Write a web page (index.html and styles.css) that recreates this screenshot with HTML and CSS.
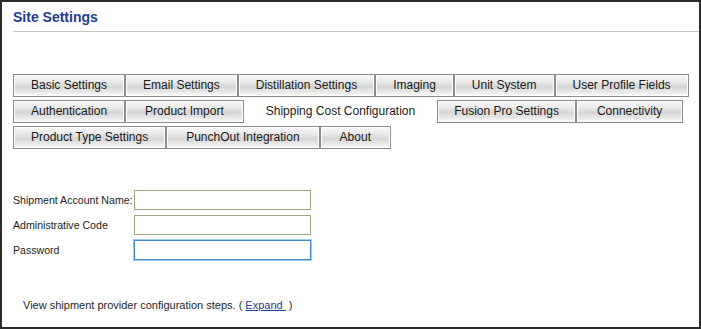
FILE: index.html
```html
<!DOCTYPE html>
<html lang="en">
<head>
    <meta charset="UTF-8">
    <meta name="viewport" content="width=device-width, initial-scale=1.0">
    <title>Site Settings</title>
    <link rel="stylesheet" href="styles.css">
</head>
<body>
    <div class="page">
        <h1 class="page-title">Site Settings</h1>

        <div class="tabs">
            <div class="tab-row">
                <a class="tab">Basic Settings</a>
                <a class="tab">Email Settings</a>
                <a class="tab">Distillation Settings</a>
                <a class="tab">Imaging</a>
                <a class="tab">Unit System</a>
                <a class="tab">User Profile Fields</a>
            </div>
            <div class="tab-row">
                <a class="tab">Authentication</a>
                <a class="tab mid">Product Import</a>
                <a class="tab active">Shipping Cost Configuration</a>
                <a class="tab narrow">Fusion Pro Settings</a>
                <a class="tab wide">Connectivity</a>
            </div>
            <div class="tab-row">
                <a class="tab">Product Type Settings</a>
                <a class="tab mid">PunchOut Integration</a>
                <a class="tab mid">About</a>
            </div>
        </div>

        <form class="shipping-form">
            <div class="form-row">
                <label for="accountName">Shipment Account Name:</label>
                <input type="text" id="accountName">
            </div>
            <div class="form-row">
                <label for="adminCode">Administrative Code</label>
                <input type="text" id="adminCode">
            </div>
            <div class="form-row">
                <label for="password">Password</label>
                <input type="password" id="password" autofocus>
            </div>
        </form>

        <p class="steps">View shipment provider configuration steps. ( <a href="#">Expand&nbsp;</a> )</p>
    </div>
</body>
</html>
```

FILE: styles.css
```css
body {
    margin: 0;
    font-family: "Liberation Sans", Arial, sans-serif;
    color: #1e1e1e;
    background-color: #fff;
}
.page {
    width: 701px;
    height: 329px;
    box-sizing: border-box;
    border: 2px solid #2b2b2b;
    padding-left: 11px;
    overflow: hidden;
}
.page-title {
    margin: 0;
    padding: 7px 0 5px;
    font-size: 14px;
    line-height: 17px;
    font-weight: bold;
    color: #1c3c96;
    border-bottom: 1px solid #c8c8c8;
}
.tabs {
    margin-top: 42px;
    display: flex;
    flex-direction: column;
    gap: 3px;
}
.tab-row {
    display: flex;
}
.tab {
    display: block;
    height: 23px;
    box-sizing: border-box;
    padding: 0 17px;
    font-size: 12px;
    line-height: 21px;
    text-align: center;
    color: #1a1a1a;
    white-space: nowrap;
    border: 1px solid #8c8c8c;
    box-shadow: inset 1px 1px 0 #fff, inset -1px -1px 0 #fff;
    background: linear-gradient(#f7f7f7 0%, #ebebeb 30%, #d6d6d6 55%, #e4e4e4 75%, #fbfbfb 100%);
    cursor: pointer;
}
.tab.mid {
    padding: 0 19px;
}
.tab.wide {
    padding: 0 20px;
}
.tab.narrow {
    padding: 0 16px;
}
.tab.active {
    background: #fff;
    border-color: transparent;
    box-shadow: none;
    height: 26px;
    margin-top: -3px;
    padding: 3px 21px 0;
}
.shipping-form {
    margin-top: 41px;
}
.form-row {
    display: flex;
    align-items: center;
    height: 20px;
    margin-bottom: 5px;
}
.form-row label {
    width: 121px;
    flex: none;
    font-size: 10.6px;
    white-space: nowrap;
}
.form-row input {
    width: 177px;
    height: 20px;
    box-sizing: border-box;
    margin: 0;
    padding: 1px 2px;
    font-family: "Liberation Sans", Arial, sans-serif;
    font-size: 11px;
    border: 1px solid #a5a582;
    border-radius: 0;
    outline: none;
}
.form-row input:focus {
    border: 1px solid #3d8ad0;
    box-shadow: 0 0 0 1px #9fcdef;
    caret-color: #000;
}
.steps {
    margin: 39px 0 0 10px;
    font-size: 11px;
    color: #1e1e1e;
}
.steps a {
    color: #1c3c96;
    text-decoration: underline;
}
```
